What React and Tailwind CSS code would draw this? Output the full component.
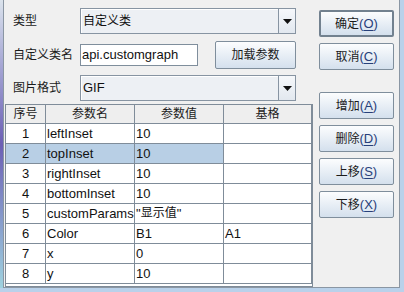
import React from 'react';

const font = { fontFamily: '"Liberation Sans", "Noto Sans CJK SC", sans-serif' };

const rows = [
    ['1', 'leftInset', '10', ''],
    ['2', 'topInset', '10', ''],
    ['3', 'rightInset', '10', ''],
    ['4', 'bottomInset', '10', ''],
    ['5', 'customParams', '"显示值"', ''],
    ['6', 'Color', 'B1', 'A1'],
    ['7', 'x', '0', ''],
    ['8', 'y', '10', ''],
];

const Arrow = () => (
    <svg width="9" height="5" viewBox="0 0 9 5">
        <path d="M0 0H9L4.5 5Z" fill="#111" />
    </svg>
);

const Combo = ({ value }) => (
    <div className="flex h-[26px] w-[216px] border border-[#8794a2] bg-[#edf0f4]">
        <div className="flex flex-1 items-center pl-[2px] text-[13px] text-[#111] shadow-[inset_1px_1px_0_#ffffff]">
            {value}
        </div>
        <div className="flex w-[17px] items-center justify-center border-l border-[#8794a2] bg-linear-to-b from-[#f6f8fb] to-[#e2e8ef]">
            <Arrow />
        </div>
    </div>
);

const Btn = ({ label, keyName, isDefault }) => (
    <button
        className={`flex h-[27px] w-[75px] items-center justify-center rounded-[2px] bg-linear-to-b from-[#fcfdfe] to-[#d4e0ed] text-[#1b1b1b] ${
            isDefault ? 'border-2 border-[#72818f]' : 'border border-[#7f8e9c]'
        }`}
    >
        <span className="text-[12px]">{label}</span>
        {keyName && (
            <span className="text-[13px] text-[#27407a]">
                (<span className="underline underline-offset-2">{keyName}</span>)
            </span>
        )}
    </button>
);

// one table cell: fixed width, 19px content + 1px right/bottom grid line
const Cell = ({ w, bg = 'bg-white', center, children }) => (
    <div
        className={`flex h-[20px] shrink-0 items-center overflow-hidden whitespace-nowrap border-r border-b border-[#7f8c99] leading-[19px] ${bg} ${
            center ? 'justify-center' : 'pl-px'
        } ${w}`}
    >
        {children}
    </div>
);

const App = () => {
    return (
        <div className="flex h-[292px] w-[404px] flex-col bg-[#b9d1ea]" style={font}>
            <div className="flex h-[288px]">
                <div className="w-[3px] bg-linear-to-b from-[#dbe3ec] via-[#6c5fb4] to-[#9fd2df]" />
                <div className="flex w-[397px] border-x border-b border-[#8a96a3] bg-[#f0f0f0]">
                    {/* left: form + table */}
                    <div className="flex w-[309px] flex-col">
                        <div className="mt-[8px] flex h-[26px] items-center">
                            <span className="w-[76px] pl-[9px] text-[12px] text-[#1b1b1b]">类型</span>
                            <Combo value={<span className="text-[12px]">自定义类</span>} />
                        </div>
                        <div className="mt-[7px] flex h-[28px] items-center">
                            <span className="w-[76px] pl-[9px] text-[12px] text-[#1b1b1b]">自定义类名</span>
                            <div className="flex h-[22px] w-[118px] items-center border border-[#7f8e9c] bg-white pl-[1px] text-[13px] text-[#111]">
                                api.customgraph
                            </div>
                            <button className="ml-[17px] flex h-[28px] w-[81px] items-center justify-center rounded-[2px] border border-[#7f8e9c] bg-linear-to-b from-[#fcfdfe] to-[#d4e0ed] text-[12px] text-[#1b1b1b]">
                                加载参数
                            </button>
                        </div>
                        <div className="mt-[6px] flex h-[26px] items-center">
                            <span className="w-[76px] pl-[9px] text-[12px] text-[#1b1b1b]">图片格式</span>
                            <Combo value="GIF" />
                        </div>

                        {/* table */}
                        <div className="ml-px mt-[3px] flex h-[183px] w-[308px] flex-col border border-[#7f8c99] bg-white">
                            <div className="flex h-[19px] text-[12px] text-[#1b1b1b]">
                                <div className="flex h-[19px] w-[40px] items-center justify-center border-r border-b border-[#7f8c99] bg-[#eeeeee]">序号</div>
                                <div className="flex h-[19px] w-[89px] items-center justify-center border-r border-b border-[#7f8c99] bg-[#eeeeee]">参数名</div>
                                <div className="flex h-[19px] w-[89px] items-center justify-center border-r border-b border-[#7f8c99] bg-[#eeeeee]">参数值</div>
                                <div className="flex h-[19px] w-[88px] items-center justify-center border-r border-b border-[#7f8c99] bg-[#eeeeee]">基格</div>
                            </div>
                            {rows.map((r, i) => {
                                const bg = i === 1 ? 'bg-[#b8cfe5]' : 'bg-white';
                                return (
                                    <div key={r[0]} className="flex h-[20px] text-[13px] text-[#111]">
                                        <Cell w="w-[40px]" bg={bg} center>
                                            {r[0]}
                                        </Cell>
                                        <Cell w="w-[89px]" bg={bg}>
                                            {r[1]}
                                        </Cell>
                                        <Cell w="w-[89px]" bg={bg}>
                                            {r[2].startsWith('"') ? (
                                                <>
                                                    "<span className="text-[12px]">显示值</span>"
                                                </>
                                            ) : (
                                                r[2]
                                            )}
                                        </Cell>
                                        <Cell w="w-[88px]">{r[3]}</Cell>
                                    </div>
                                );
                            })}
                        </div>
                    </div>

                    {/* right: buttons */}
                    <div className="ml-[6px] flex flex-col pt-[10px]">
                        <div className="flex flex-col gap-[6px]">
                            <Btn label="确定" keyName="O" isDefault />
                            <Btn label="取消" keyName="C" />
                        </div>
                        <div className="mt-[22px] flex flex-col gap-[6px]">
                            <Btn label="增加" keyName="A" />
                            <Btn label="删除" keyName="D" />
                            <Btn label="上移" keyName="S" />
                            <Btn label="下移" keyName="X" />
                        </div>
                    </div>
                </div>
            </div>
        </div>
    );
};

export default App;
